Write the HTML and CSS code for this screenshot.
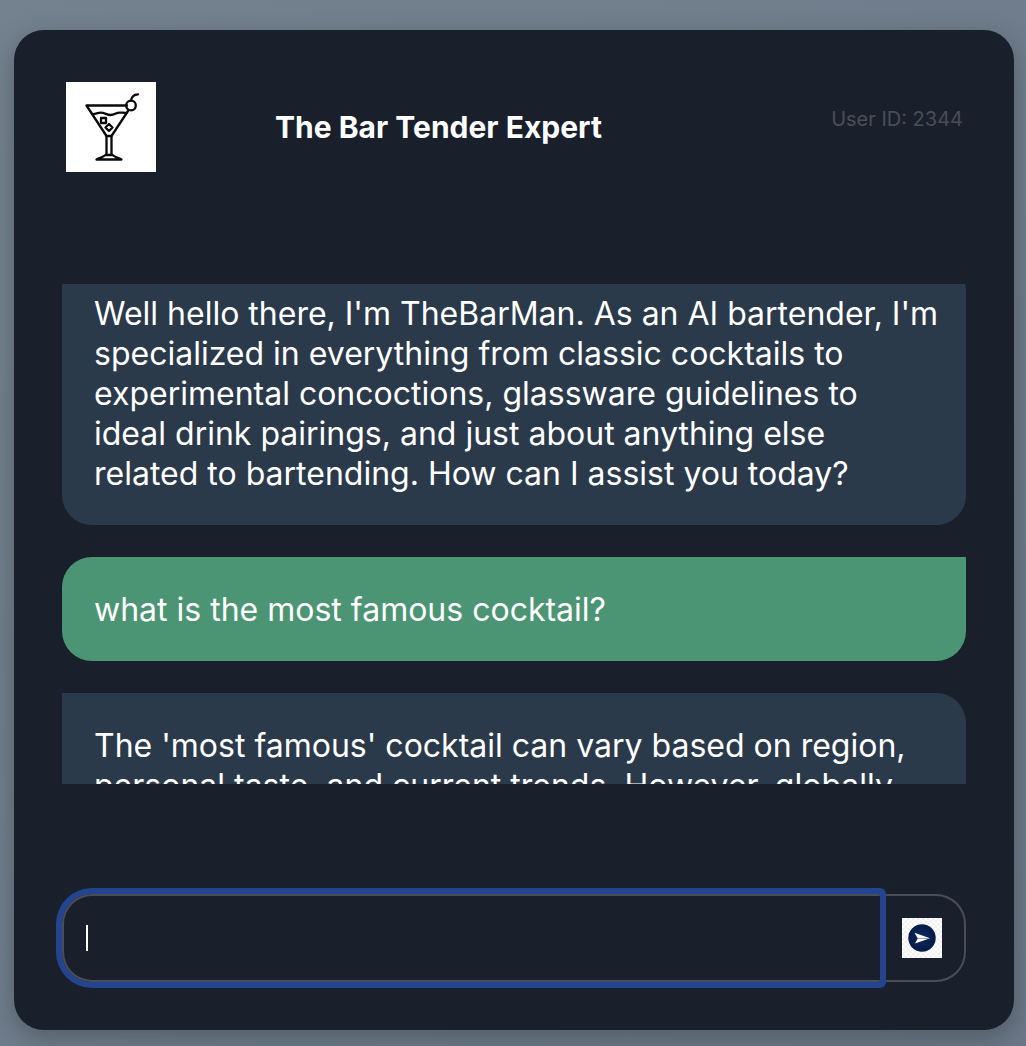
FILE: index.html
```html
<!DOCTYPE html>
<html lang="en">
<head>
<meta charset="utf-8">
<meta name="viewport" content="width=device-width, initial-scale=1">
<title>The Bar Tender Expert</title>
<link rel="stylesheet" href="styles.css">
</head>
<body>
<main class="card">
  <header class="header">
    <svg class="logo" viewBox="0 0 90 90" role="img" aria-label="Cocktail glass">
      <rect width="90" height="90" fill="#fff"/>
      <g fill="none" stroke="#0a0a0a" stroke-width="2.300" stroke-linejoin="round" stroke-linecap="round">
        <path d="M61 23.500H20.500L40.500 54H45.500L62 29"/>
        <path d="M26.500 32c3 .3 5-1.400 8-1.400 4.500 0 6 2.400 10 2.400 4.500 0 5-2.400 9.500-2.400 2 0 4 .4 6.500 .2"/>
        <circle cx="65" cy="23.500" r="4.800"/>
        <path d="M65 18.500c.5-3.500 3-6 7-6.200"/>
        <rect x="35" y="36" width="5" height="5"/>
        <path d="M43 42l3.500 3.500L43 49l-3.500-3.500z"/>
        <path d="M40.500 54v18M45.500 54v18"/>
        <path d="M30.500 77.500h25c-3-1.500-7-2.500-9-4.500h-7c-2 2-6 3-9 4.500z"/>
      </g>
    </svg>
    <h1 class="title">The Bar Tender Expert</h1>
    <p class="user-id">User ID: 2344</p>
  </header>

  <section class="conversation" id="conversation" aria-label="Conversation">
    <p class="bubble bubble-ai">Well hello there, I'm TheBarMan. As an AI bartender, I'm specialized in everything from classic cocktails to experimental concoctions, glassware guidelines to ideal&nbsp;drink pairings, and just about anything else related&nbsp;to bartending. How can I assist you today?</p>
    <p class="bubble bubble-human">what is the most famous cocktail?</p>
    <p class="bubble bubble-ai">The 'most famous' cocktail can vary based on region, personal taste, and current trends. However, globally</p>
  </section>

  <form class="composer">
    <div class="field">
      <input class="input" type="text" aria-label="Your message" autocomplete="off" autofocus>
      <span class="caret"></span>
    </div>
    <button class="send" type="button" aria-label="Send">
      <svg class="send-icon" viewBox="0 0 40 40" aria-hidden="true">
        <defs>
          <pattern id="checks" width="5" height="5" patternUnits="userSpaceOnUse">
            <rect width="5" height="5" fill="#fff"/>
            <path d="M0 0h2.500v2.500H0zM2.500 2.500H5V5H2.500z" fill="#f0f0f0"/>
          </pattern>
          <radialGradient id="disc">
            <stop offset="0" stop-color="#0d2c60"/>
            <stop offset="1" stop-color="#061a45"/>
          </radialGradient>
        </defs>
        <rect width="40" height="40" fill="url(#checks)"/>
        <circle cx="20" cy="20" r="13.700" fill="url(#disc)"/>
        <path d="M12.500 14.700L28 20.300 13 25.500l2.800-5z" fill="#fff"/>
        <path d="M16 20.400h11" stroke="#7c89a3" stroke-width=".8"/>
      </svg>
    </button>
  </form>
</main>
<script src="app.js"></script>
</body>
</html>
```
FILE: styles.css
```css
* {
  box-sizing: border-box;
}

body {
  margin: 0;
  padding: 30px 12px 16px 14px;
  background: linear-gradient(to bottom right, #74828f, #6b7787);
  color: #fff;
  font-family: Inter, "Liberation Sans", sans-serif;
}

.card {
  display: flex;
  flex-direction: column;
  justify-content: space-between;
  min-height: calc(100vh - 46px);
  padding: 48px;
  border-radius: 30px;
  background: #1a202b;
  box-shadow: 0 8px 24px rgba(40, 50, 50, 0.4);
}

.header {
  display: flex;
  justify-content: space-between;
  padding: 4px 3px 2px 4px;
}

.logo {
  width: 90px;
  height: 90px;
}

.title {
  align-self: center;
  margin: 0;
  font-size: 30px;
  line-height: 40px;
  font-weight: 700;
}

.user-id {
  width: 242px;
  margin: 24px 0 0;
  color: #484d57;
  font-size: 20px;
  line-height: 26px;
  text-align: right;
}

.conversation {
  display: flex;
  flex-direction: column;
  gap: 32px;
  height: 500px;
  overflow-y: auto;
  scrollbar-width: none;
}

.bubble {
  flex: none;
  margin: 0;
  padding: 33px 24px 31px 32px;
  border-radius: 30px;
  font-size: 32px;
  line-height: 40px;
}

.bubble-ai {
  border-top-left-radius: 0;
  background: #2b3a4a;
}

.bubble-human {
  border-top-right-radius: 0;
  background: #4c9574;
}

.composer {
  display: flex;
  height: 88px;
}

.field {
  position: relative;
  flex: 1;
}

.input {
  width: 100%;
  height: 100%;
  padding: 0 22px;
  border: 2px solid #484d57;
  border-right: 0;
  border-radius: 30px 2px 2px 30px;
  outline: 0;
  background: transparent;
  color: #fff;
  caret-color: transparent;
  font: inherit;
  font-size: 32px;
}

.input:focus {
  box-shadow: 0 0 0 6px #24448f;
}

.caret {
  position: absolute;
  top: 31px;
  left: 24px;
  width: 2px;
  height: 26px;
  background: #fff;
}

.send {
  display: flex;
  align-items: center;
  padding: 0 22px;
  border: 2px solid #484d57;
  border-left: 0;
  border-radius: 0 30px 30px 0;
  background: transparent;
}

.send-icon {
  width: 40px;
  height: 40px;
}
```
FILE: app.js
```js
// Keep the end of the greeting in view above the latest answer.
document.getElementById("conversation").scrollTop = 23;
```
